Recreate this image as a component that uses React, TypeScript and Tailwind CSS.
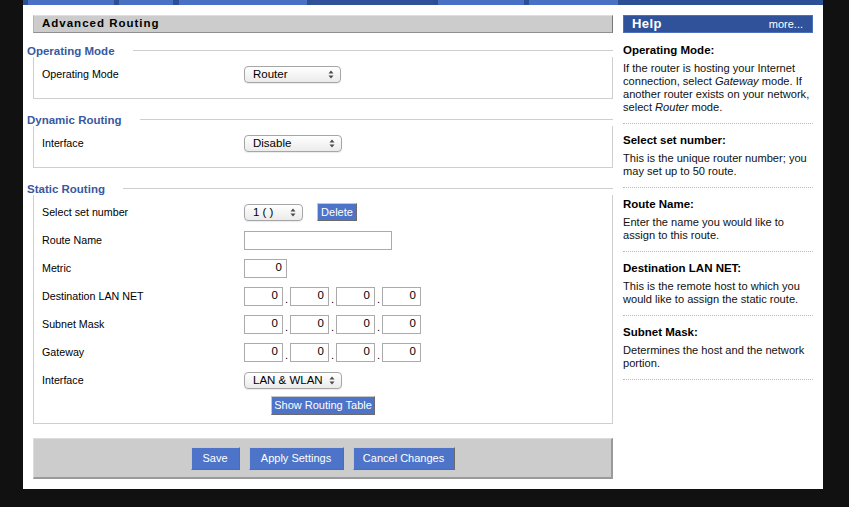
import React from 'react'

const sans = "font-['Liberation_Sans',Arial,sans-serif]"

function Select({ value, className }: { value: string; className: string }) {
  return (
    <div
      className={`${className} h-[17px] flex items-center justify-between rounded-[4px] border border-[#a6a6a6] bg-linear-to-b from-white to-[#ebebeb] pl-[8px] pr-[6px] text-[11.5px] text-black shadow-[0_1px_1px_rgba(0,0,0,0.08)]`}
    >
      <span className="pt-px">{value}</span>
      <svg width="6" height="9" viewBox="0 0 6 9">
        <path d="M3 0.5L5.5 3.5H0.5Z M3 8.5L0.5 5.5H5.5Z" fill="#4a4a4a" />
      </svg>
    </div>
  )
}

function BlueButton({ label, className }: { label: string; className: string }) {
  return (
    <div
      className={`${className} flex items-center justify-center bg-[#4d74c8] text-white text-[11px] border border-t-[#c8c8c8] border-l-[#c8c8c8] border-r-[#6b6b6b] border-b-[#6b6b6b]`}
    >
      {label}
    </div>
  )
}

function TextBox({ value, className }: { value?: string; className: string }) {
  return (
    <div
      className={`${className} h-[19px] border border-[#ababab] bg-white flex items-center justify-end pr-[4px] text-[11.5px] text-black`}
    >
      {value}
    </div>
  )
}

function IpField() {
  return (
    <div className="flex items-center">
      {[0, 1, 2, 3].map((i) => (
        <div key={i} className="flex items-center">
          {i > 0 && <span className="w-[7px] text-center text-[11px] leading-none pt-[6px]">.</span>}
          <TextBox value="0" className="w-[39px]" />
        </div>
      ))}
    </div>
  )
}

function Legend({ title, className }: { title: string; className: string }) {
  return (
    <div className={`${className} flex items-center h-[13px]`}>
      <span className="text-[11.5px] font-bold text-[#37599f] leading-none pt-[2px]">{title}</span>
      <div className="flex-1 ml-[18px] h-px bg-[#cfcfcf]" />
    </div>
  )
}

function Row({ label, children }: { label: string; children: React.ReactNode }) {
  return (
    <div className="flex items-center h-[28px]">
      <div className="w-[202px] text-[10.7px] text-black">{label}</div>
      {children}
    </div>
  )
}

const help = [
  {
    title: 'Operating Mode:',
    body: (
      <>
        If the router is hosting your Internet connection, select <i>Gateway</i> mode. If another router exists
        on your network, select <i>Router</i> mode.
      </>
    ),
  },
  { title: 'Select set number:', body: 'This is the unique router number; you may set up to 50 route.' },
  { title: 'Route Name:', body: 'Enter the name you would like to assign to this route.' },
  { title: 'Destination LAN NET:', body: 'This is the remote host to which you would like to assign the static route.' },
  { title: 'Subnet Mask:', body: 'Determines the host and the network portion.' },
]

export default function App() {
  return (
    <div className={`${sans} w-[849px] h-[507px] bg-[#111111] overflow-hidden`}>
      <div className="ml-[23px] w-[800px] h-[489px] bg-white">
        {/* top nav remnants */}
        <div className="flex h-[5px] bg-[#2d4f95] pl-[5px]">
          <div className="w-[86px] bg-[#4a72c4]" />
          <div className="w-[5px]" />
          <div className="w-[54px] bg-[#4a72c4]" />
          <div className="w-[6px]" />
          <div className="w-[128px] bg-[#4a72c4]" />
          <div className="w-[4px]" />
          <div className="w-[122px] bg-[#30529a]" />
          <div className="w-[5px]" />
          <div className="w-[86px] bg-[#4a72c4]" />
          <div className="w-[5px]" />
          <div className="w-[89px] bg-[#4a72c4]" />
        </div>

        <div className="flex pt-[10px]">
          {/* main column */}
          <div className="w-[590px] pl-[4px] flex flex-col">
            <div className="ml-[6px] h-[18px] bg-[#cccccc] border-l border-t border-l-[#b5b5b5] border-t-[#dedede] border-b border-b-[#8f8f8f] border-r border-r-[#777] flex items-center pl-[8px]">
              <span className="text-[11.5px] font-bold tracking-[1px] text-black">Advanced Routing</span>
            </div>

            <Legend title="Operating Mode" className="mt-[11px]" />
            <div className="ml-[6px] border-l border-r border-b border-[#cfcfcf] pt-[9px] pb-[16px] pl-[8px] flex items-center h-[42px]">
              <div className="w-[202px] text-[10.7px] text-black">Operating Mode</div>
              <Select value="Router" className="w-[97px]" />
            </div>

            <Legend title="Dynamic Routing" className="mt-[14px]" />
            <div className="ml-[6px] border-l border-r border-b border-[#cfcfcf] pt-[9px] pb-[16px] pl-[8px] flex items-center h-[42px]">
              <div className="w-[202px] text-[10.7px] text-black">Interface</div>
              <Select value="Disable" className="w-[98px]" />
            </div>

            <Legend title="Static Routing" className="mt-[14px]" />
            <div className="ml-[6px] border-l border-r border-b border-[#cfcfcf] pt-[3px] pb-[8px] pl-[8px] flex flex-col">
              <Row label="Select set number">
                <Select value="1 ( )" className="w-[59px]" />
                <BlueButton label="Delete" className="ml-[14px] w-[40px] h-[18px]" />
              </Row>
              <Row label="Route Name">
                <TextBox className="w-[148px]" />
              </Row>
              <Row label="Metric">
                <TextBox value="0" className="w-[43px]" />
              </Row>
              <Row label="Destination LAN NET">
                <IpField />
              </Row>
              <Row label="Subnet Mask">
                <IpField />
              </Row>
              <Row label="Gateway">
                <IpField />
              </Row>
              <Row label="Interface">
                <Select value="LAN & WLAN" className="w-[98px]" />
              </Row>
              <div className="flex justify-center mt-[2px] pr-[8px]">
                <BlueButton label="Show Routing Table" className="w-[104px] h-[19px] text-[11.5px]" />
              </div>
            </div>

            <div className="ml-[6px] mt-[14px] h-[41px] bg-[#cccccc] border-t border-l border-t-[#dcdcdc] border-l-[#dcdcdc] border-b-2 border-r-2 border-b-[#9a9a9a] border-r-[#9a9a9a] flex items-center justify-center gap-[9px]">
              <BlueButton label="Save" className="w-[49px] h-[23px] text-[11.5px]" />
              <BlueButton label="Apply Settings" className="w-[95px] h-[23px] text-[11.5px]" />
              <BlueButton label="Cancel Changes" className="w-[102px] h-[23px] text-[11.5px]" />
            </div>
          </div>

          {/* help column */}
          <div className="ml-[10px] w-[190px] flex flex-col">
            <div className="h-[18px] bg-[#30529a] border border-[#4d6fbd] flex items-center justify-between pl-[8px] pr-[9px] text-white">
              <span className="text-[13px] font-bold tracking-[0.4px]">Help</span>
              <span className="text-[11px]">more...</span>
            </div>
            <div className="h-px" />
            {help.map((h) => (
              <div key={h.title} className="pt-[10px] pb-[9px] border-b border-dotted border-[#b8b8b8]">
                <div className="h-[14px] flex items-center text-[11.5px] font-bold text-black">{h.title}</div>
                <div className="mt-[4px] text-[11.1px] leading-[13px] text-[#111] pr-[1px]">{h.body}</div>
              </div>
            ))}
          </div>
        </div>
      </div>
    </div>
  )
}
